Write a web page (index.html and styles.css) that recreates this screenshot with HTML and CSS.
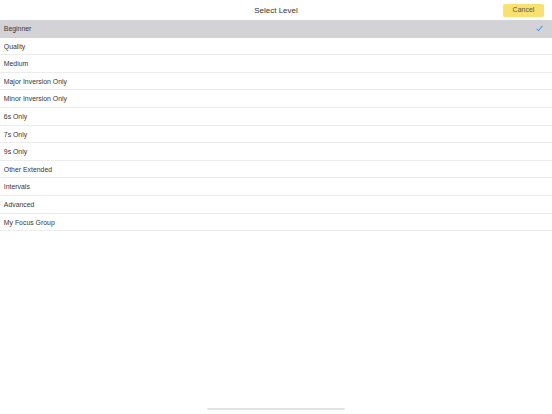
FILE: index.html
```html
<!DOCTYPE html>
<html>
<head>
<meta charset="utf-8">
<link rel="stylesheet" href="styles.css">
</head>
<body>
<div class="screen">
  <header class="bar">
    <div class="title">Select Level</div>
    <button class="cancel">Cancel</button>
  </header>
  <ul class="list">
    <li class="row selected"><span>Beginner</span>
      <svg class="check" width="7" height="7" viewBox="0 0 14 14"><path d="M1.5 8 L5 11.5 L12.5 2" fill="none" stroke="#1a7cf5" stroke-width="1.8" stroke-linecap="round" stroke-linejoin="round"/></svg>
    </li>
    <li class="row"><span>Quality</span></li>
    <li class="row"><span>Medium</span></li>
    <li class="row"><span>Major Inversion Only</span></li>
    <li class="row"><span>Minor Inversion Only</span></li>
    <li class="row"><span>6s Only</span></li>
    <li class="row"><span>7s Only</span></li>
    <li class="row"><span>9s Only</span></li>
    <li class="row"><span>Other Extended</span></li>
    <li class="row"><span>Intervals</span></li>
    <li class="row"><span>Advanced</span></li>
    <li class="row"><span>My Focus Group</span></li>
  </ul>
  <div class="spacer"></div>
  <div class="home"></div>
</div>
</body>
</html>
```

FILE: styles.css
```css
html, body {
  margin: 0;
  padding: 0;
  background: #ffffff;
}
body {
  font-family: "Liberation Sans", Arial, sans-serif;
  color: #1c1c1e;
}
.screen {
  width: 552px;
  height: 414px;
  display: flex;
  flex-direction: column;
  overflow: hidden;
}
.bar {
  height: 20px;
  display: flex;
  align-items: center;
  justify-content: center;
  position: relative;
  flex: none;
}
.title {
  font-size: 8px;
  color: #333333;
}
.cancel {
  position: absolute;
  right: 8px;
  top: 4px;
  width: 41px;
  height: 12.5px;
  border: none;
  border-radius: 2px;
  background: #f8e170;
  color: #5a5540;
  font-family: "Liberation Sans", Arial, sans-serif;
  font-size: 7px;
  padding: 0;
  line-height: 12.5px;
}
.list {
  list-style: none;
  margin: 0;
  padding: 0;
  flex: none;
}
.row {
  height: 17.6px;
  box-sizing: border-box;
  border-bottom: 1px solid #ececec;
  display: flex;
  align-items: center;
  justify-content: space-between;
  padding: 0.5px 9px 0 3.8px;
  font-size: 6.9px;
  color: #363636;
}
.row.selected {
  background: #d2d2d7;
  border-bottom-color: #d2d2d7;
}
.check {
  display: block;
}
.spacer {
  flex: 1;
}
.home {
  flex: none;
  width: 138px;
  height: 2px;
  border-radius: 1px;
  background: #e3e3e3;
  margin: 0 auto 4px;
}
```
